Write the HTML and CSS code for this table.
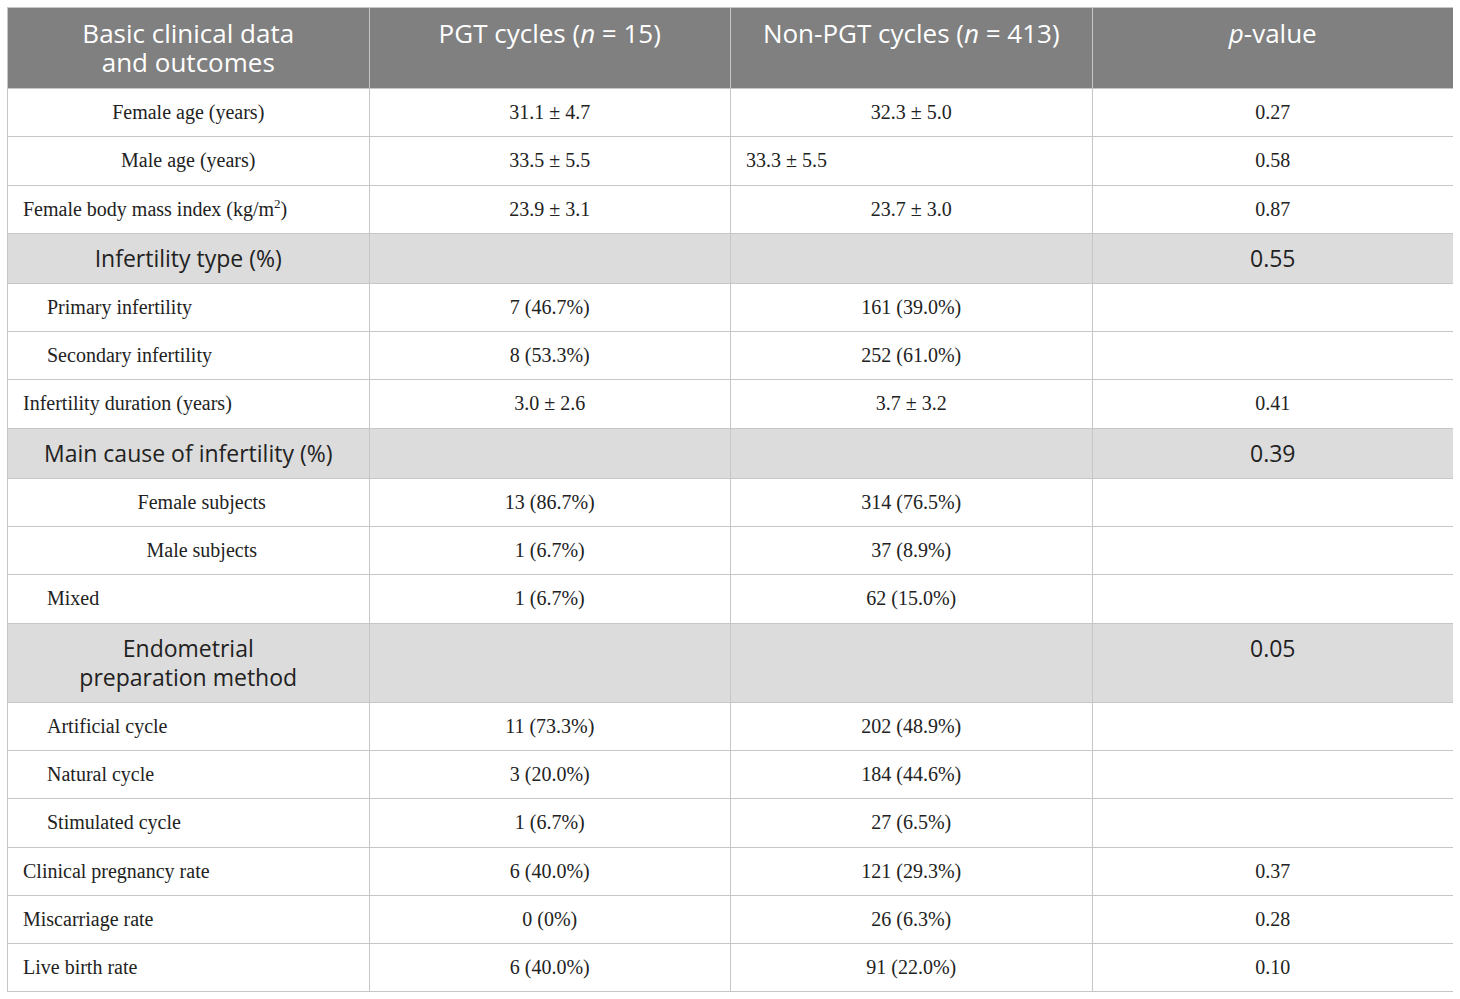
FILE: index.html
```html
<!DOCTYPE html>
<html lang="en">
<head>
  <meta charset="UTF-8" />
  <title>PGT vs non-PGT cycles</title>
  <link rel="stylesheet" href="styles.css">
</head>
<body>
  <!-- 表格開始 -->
  <table class="data-table">
    <thead>
      <tr>
        <th><span class="line">Basic clinical data</span><span class="line">and outcomes</span></th>
        <th>PGT cycles (<i>n</i> = 15)</th>
        <th>Non-PGT cycles (<i>n</i> = 413)</th>
        <th><i>p</i>-value</th>
      </tr>
    </thead>
    <tbody>
      <tr>
        <td class="center">Female age (years)</td>
        <td>31.1 ± 4.7</td>
        <td>32.3 ± 5.0</td>
        <td>0.27</td>
      </tr>
      <tr>
        <td class="center">Male age (years)</td>
        <td>33.5 ± 5.5</td>
        <td class="left">33.3 ± 5.5</td>
        <td>0.58</td>
      </tr>
      <tr>
        <td class="left">Female body mass index (kg/m<sup>2</sup>)</td>
        <td>23.9 ± 3.1</td>
        <td>23.7 ± 3.0</td>
        <td>0.87</td>
      </tr>
      <tr class="group">
        <td>Infertility type (%)</td>
        <td></td>
        <td></td>
        <td>0.55</td>
      </tr>
      <tr>
        <td class="indent">Primary infertility</td>
        <td>7 (46.7%)</td>
        <td>161 (39.0%)</td>
        <td></td>
      </tr>
      <tr>
        <td class="indent">Secondary infertility</td>
        <td>8 (53.3%)</td>
        <td>252 (61.0%)</td>
        <td></td>
      </tr>
      <tr>
        <td class="left">Infertility duration (years)</td>
        <td>3.0 ± 2.6</td>
        <td>3.7 ± 3.2</td>
        <td>0.41</td>
      </tr>
      <tr class="group">
        <td>Main cause of infertility (%)</td>
        <td></td>
        <td></td>
        <td>0.39</td>
      </tr>
      <tr>
        <td class="center shift">Female subjects</td>
        <td>13 (86.7%)</td>
        <td>314 (76.5%)</td>
        <td></td>
      </tr>
      <tr>
        <td class="center shift">Male subjects</td>
        <td>1 (6.7%)</td>
        <td>37 (8.9%)</td>
        <td></td>
      </tr>
      <tr>
        <td class="indent">Mixed</td>
        <td>1 (6.7%)</td>
        <td>62 (15.0%)</td>
        <td></td>
      </tr>
      <tr class="group">
        <td><span class="line">Endometrial</span><span class="line">preparation method</span></td>
        <td></td>
        <td></td>
        <td>0.05</td>
      </tr>
      <tr>
        <td class="indent">Artificial cycle</td>
        <td>11 (73.3%)</td>
        <td>202 (48.9%)</td>
        <td></td>
      </tr>
      <tr>
        <td class="indent">Natural cycle</td>
        <td>3 (20.0%)</td>
        <td>184 (44.6%)</td>
        <td></td>
      </tr>
      <tr>
        <td class="indent">Stimulated cycle</td>
        <td>1 (6.7%)</td>
        <td>27 (6.5%)</td>
        <td></td>
      </tr>
      <tr>
        <td class="left">Clinical pregnancy rate</td>
        <td>6 (40.0%)</td>
        <td>121 (29.3%)</td>
        <td>0.37</td>
      </tr>
      <tr>
        <td class="left">Miscarriage rate</td>
        <td>0 (0%)</td>
        <td>26 (6.3%)</td>
        <td>0.28</td>
      </tr>
      <tr>
        <td class="left">Live birth rate</td>
        <td>6 (40.0%)</td>
        <td>91 (22.0%)</td>
        <td>0.10</td>
      </tr>
    </tbody>
  </table>
  <!-- 表格結束 -->
</body>
</html>
```

FILE: styles.css
```css
body {
  margin: 7px;
  background: #fff;
  color: #222;
}

/* 表格樣式 */
.data-table {
  width: 1447px;
  border-collapse: collapse;
  table-layout: fixed;
  font-family: 'Liberation Serif', serif;
  font-size: 20px;
}

.data-table th,
.data-table td {
  border: 1px solid #c6c6c6;
  text-align: center;
  vertical-align: top;
}

.data-table th {
  background-color: #7f807f;
  color: #fff;
  font-family: 'Open Sans', sans-serif;
  font-weight: 400;
  font-size: 26px;
  line-height: 29px;
  padding: 11px 10px 11px;
}

/* 兩行標題：每行一個區塊 */
.line {
  display: block;
  height: 29px;
}

.data-table td {
  line-height: 23.3px;
  padding: 12px 15px;
}

.data-table td.left {
  text-align: left;
}

.data-table td.indent {
  text-align: left;
  padding-left: 39px;
}

.data-table td.shift {
  padding-left: 42px;
}

.data-table sup {
  font-size: 13px;
  line-height: 0;
  vertical-align: 8px;
}

/* 分組列 */
.group td {
  background-color: #dcdcdc;
  font-family: 'Open Sans', sans-serif;
  font-size: 23px;
  line-height: 29px;
  padding: 10px 15px 10px;
}
```
